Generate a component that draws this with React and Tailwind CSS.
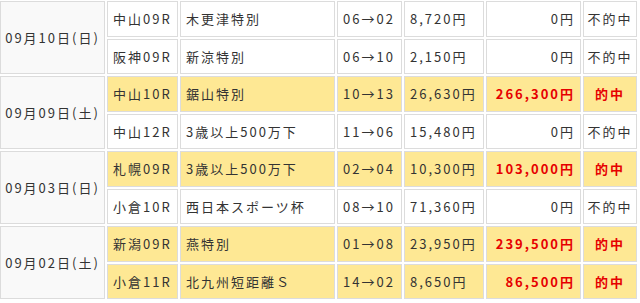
import React from 'react'

// 払戻実績テーブル（日付ごとに2レース）
const DAYS = [
  {
    date: '09月10日(日)',
    races: [
      { venue: '中山09R', name: '木更津特別', course: '06→02', bet: '8,720円', ret: '0円', hit: false },
      { venue: '阪神09R', name: '新涼特別', course: '06→10', bet: '2,150円', ret: '0円', hit: false },
    ],
  },
  {
    date: '09月09日(土)',
    races: [
      { venue: '中山10R', name: '鋸山特別', course: '10→13', bet: '26,630円', ret: '266,300円', hit: true },
      { venue: '中山12R', name: '3歳以上500万下', course: '11→06', bet: '15,480円', ret: '0円', hit: false },
    ],
  },
  {
    date: '09月03日(日)',
    races: [
      { venue: '札幌09R', name: '3歳以上500万下', course: '02→04', bet: '10,300円', ret: '103,000円', hit: true },
      { venue: '小倉10R', name: '西日本スポーツ杯', course: '08→10', bet: '71,360円', ret: '0円', hit: false },
    ],
  },
  {
    date: '09月02日(土)',
    races: [
      { venue: '新潟09R', name: '燕特別', course: '01→08', bet: '23,950円', ret: '239,500円', hit: true },
      { venue: '小倉11R', name: '北九州短距離Ｓ', course: '14→02', bet: '8,650円', ret: '86,500円', hit: true },
    ],
  },
]

const cell = 'border border-[#dcdcdc] px-[5px] align-middle whitespace-nowrap overflow-hidden'

export default function App() {
  return (
    <div
      className="w-[640px] h-[303px] overflow-hidden bg-white text-[13px] tracking-[2px] text-[#333]"
      style={{ fontFamily: '"Noto Sans CJK JP", "Noto Sans", sans-serif' }}
    >
      <table className="border-separate border-spacing-[2px] w-[641px] -ml-[2px] -mt-[1px] table-fixed">
        <colgroup>
          <col className="w-[105px]" />
          <col className="w-[71px]" />
          <col className="w-[155px]" />
          <col className="w-[65px]" />
          <col className="w-[80px]" />
          <col className="w-[95px]" />
          <col className="w-[54px]" />
        </colgroup>
        <tbody>
          {DAYS.map((day) =>
            day.races.map((r, i) => {
              const bg = r.hit ? 'bg-[#fee894]' : 'bg-white'
              const h = i === 0 ? 'h-[36px]' : 'h-[35px]'
              return (
                <tr key={day.date + i}>
                  {i === 0 && (
                    <td rowSpan={2} className={`${cell} bg-[#f9f9f9] text-center !px-0`}>
                      {day.date}
                    </td>
                  )}
                  <td className={`${cell} ${bg} ${h}`}>{r.venue}</td>
                  <td className={`${cell} ${bg}`}>{r.name}</td>
                  <td className={`${cell} ${bg}`}>{r.course}</td>
                  <td className={`${cell} ${bg}`}>{r.bet}</td>
                  <td className={`${cell} ${bg} text-right ${r.hit ? 'text-[#e60000] font-bold' : ''}`}>
                    {r.ret}
                  </td>
                  <td className={`${cell} ${bg} text-center !px-0 ${r.hit ? 'text-[#e60000] font-bold' : ''}`}>
                    {r.hit ? '的中' : '不的中'}
                  </td>
                </tr>
              )
            })
          )}
        </tbody>
      </table>
    </div>
  )
}
